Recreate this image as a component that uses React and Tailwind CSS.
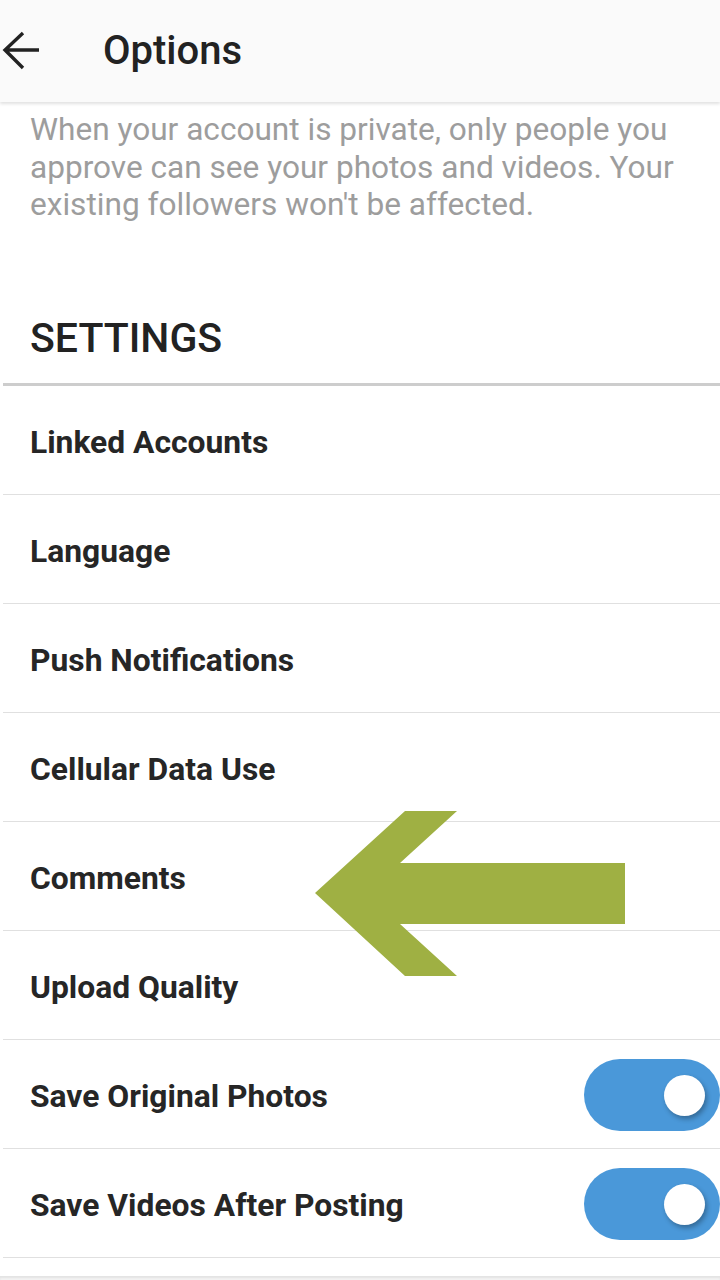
import React from "react";

const rows = [
  { label: "Linked Accounts" },
  { label: "Language" },
  { label: "Push Notifications" },
  { label: "Cellular Data Use" },
  { label: "Comments" },
  { label: "Upload Quality" },
  { label: "Save Original Photos", toggle: true },
  { label: "Save Videos After Posting", toggle: true },
];

function Toggle() {
  return (
    <div className="relative mt-[2px] h-[72px] w-[136px] shrink-0 rounded-full bg-[#4a98d9]">
      <div className="absolute left-[80px] top-[16px] h-[41px] w-[41px] rounded-full bg-white shadow-[2px_3px_5px_rgba(0,0,0,0.3)]" />
    </div>
  );
}

export default function App() {
  return (
    <div
      className="relative h-[1280px] w-[720px] overflow-hidden bg-white text-[#262626]"
      style={{ fontFamily: "Roboto, 'Noto Sans', sans-serif" }}
    >
      <header className="flex h-[102px] items-center bg-[#fafafa] shadow-[0_2px_3px_rgba(0,0,0,0.12)]">
        <svg width="40" height="40" viewBox="0 0 40 40" className="ml-[1px] shrink-0">
          <path d="M38 19H4M22 2L4 19l18 18" fill="none" stroke="#222" strokeWidth="3.4" />
        </svg>
        <h1 className="ml-[62px] text-[40px] font-medium leading-none text-[#222]">Options</h1>
      </header>

      <p className="mt-[9px] pl-[30px] pr-[10px] text-[31.6px] leading-[37.5px] text-[#9d9d9d]">
        When your account is private, only people you approve can see your photos and videos. Your existing followers won't be affected.
      </p>

      <div className="mt-[91px] flex h-[48px] items-center pl-[30px]">
        <h2 className="text-[41px] font-medium leading-none text-[#222]">SETTINGS</h2>
      </div>

      <div className="ml-[3px] mt-[20px] h-[3px] bg-[#cdcdcd]" />

      <ul className="ml-[3px]">
        {rows.map((r) => (
          <li
            key={r.label}
            className="flex h-[109px] items-center justify-between border-b border-[#e0e0e0] pl-[27px]"
          >
            <span className="mt-[6px] text-[31.8px] font-bold leading-none text-[#262626]">{r.label}</span>
            {r.toggle && <Toggle />}
          </li>
        ))}
      </ul>

      <div className="mt-[18px] h-[10px] bg-[#f2f2f2] shadow-[inset_0_2px_2px_rgba(0,0,0,0.06)]" />

      <svg
        className="absolute left-0 top-0"
        width="720"
        height="1280"
        viewBox="0 0 720 1280"
        style={{ pointerEvents: "none" }}
      >
        <polygon
          points="315,893 405,811 457,811 400,863 625,863 625,924 400,924 457,976 405,976"
          fill="#9fb043"
        />
      </svg>
    </div>
  );
}
